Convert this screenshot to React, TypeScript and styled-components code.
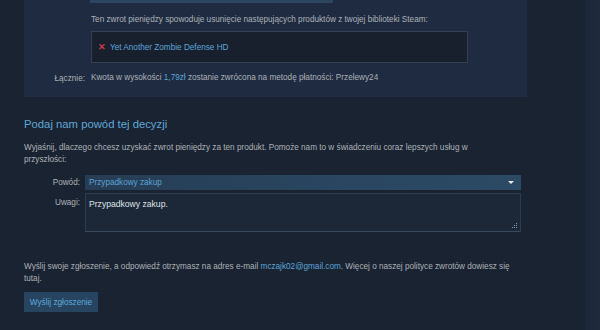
import React from "react";
import styled, { createGlobalStyle } from "styled-components";

const Global = createGlobalStyle`
  html, body {
    margin: 0;
    padding: 0;
    background: #1a2331;
    font-family: "Liberation Sans", Arial, sans-serif;
  }
`;

// całe okno: kolumna treści + wąski pasek po prawej
const Page = styled.div`
  display: flex;
  width: 600px;
  height: 330px;
  overflow: hidden;
`;

const Content = styled.div`
  width: 585px;
  background: #1a2331;
`;

const SideStrip = styled.div`
  flex: 1;
  background: linear-gradient(90deg, #1c2838, #1f2b3c);
`;

// górny panel z podsumowaniem zwrotu
const Summary = styled.section`
  margin-left: 24px;
  width: 503px;
  height: 97px;
  background: #1f2b41;
  box-sizing: border-box;
`;

const TopButtonEdge = styled.div`
  margin-left: 66px;
  width: 243px;
  height: 3px;
  background: #2e4560;
`;

const Row = styled.div<{ $top?: number }>`
  display: grid;
  grid-template-columns: 61px 1fr;
  column-gap: 6px;
  margin-top: ${(p) => p.$top ?? 0}px;
  align-items: center;
`;

const Label = styled.div`
  text-align: right;
  font-size: 8.2px;
  color: #acb2b8;
`;

const Text = styled.div`
  font-size: 8.2px;
  line-height: 12px;
  color: #acb2b8;
`;

const ProductBox = styled.div`
  width: 377px;
  height: 32px;
  box-sizing: border-box;
  background: #19202d;
  border: 1px solid #344052;
  display: flex;
  align-items: center;
  padding-left: 6px;
  gap: 4px;
  font-size: 8.2px;
`;

const Cross = styled.span`
  color: #c9394d;
  font-weight: bold;
  font-size: 9px;
`;

const Link = styled.span`
  color: #5aa6d8;
`;

// dolna część z formularzem
const Reason = styled.section`
  padding: 0 0 0 24px;
  width: 497px;
`;

const Heading = styled.h2`
  margin: 19px 0 0;
  font-weight: normal;
  font-size: 11.3px;
  line-height: 16px;
  color: #5fa7d6;
`;

const Para = styled.p<{ $top: number }>`
  margin: ${(p) => p.$top}px 0 0;
  font-size: 8.2px;
  line-height: 12px;
  color: #acb2b8;
  white-space: nowrap;
`;

const FormRow = styled.div<{ $top: number }>`
  display: grid;
  grid-template-columns: 56px 436px;
  column-gap: 5px;
  margin-top: ${(p) => p.$top}px;
  align-items: start;
`;

const FormLabel = styled.div<{ $pad: number }>`
  text-align: right;
  font-size: 8.2px;
  color: #acb2b8;
  padding-top: ${(p) => p.$pad}px;
`;

const Select = styled.div`
  height: 15px;
  background: linear-gradient(90deg, #263d55 0%, #2a4660 60%, #2c4a64 100%);
  display: flex;
  align-items: center;
  justify-content: space-between;
  padding: 0 7px 0 4px;
  font-size: 8.2px;
  color: #5ba3d3;
`;

const Arrow = styled.span`
  width: 0;
  height: 0;
  border-left: 3px solid transparent;
  border-right: 3px solid transparent;
  border-top: 3px solid #e6eef5;
`;

const TextArea = styled.div`
  height: 39px;
  box-sizing: border-box;
  background: #1c2737;
  border: 1px solid #2f3b4c;
  border-bottom-color: #3a4a5e;
  padding: 5px 3px;
  font-size: 8.6px;
  color: #dde3e8;
  position: relative;
`;

const Grip = styled.svg`
  position: absolute;
  right: 2px;
  bottom: 2px;
`;

const Button = styled.button`
  margin-top: 7px;
  width: 74px;
  height: 20px;
  border: none;
  background: #274561;
  color: #5fa9d8;
  font-family: inherit;
  font-size: 8.2px;
  padding: 0;
`;

export default function App() {
  return (
    <>
      <Global />
      <Page>
        <Content>
          <Summary>
            <TopButtonEdge />
            <Row $top={11}>
              <span />
              <Text>
                Ten zwrot pieniędzy spowoduje usunięcie następujących produktów z twojej biblioteki Steam:
              </Text>
            </Row>
            <Row $top={5}>
              <span />
              <ProductBox>
                <Cross>✕</Cross>
                <Link>Yet Another Zombie Defense HD</Link>
              </ProductBox>
            </Row>
            <Row $top={9}>
              <Label>Łącznie:</Label>
              <Text>
                Kwota w wysokości <Link>1,79zł</Link> zostanie zwrócona na metodę płatności: Przelewy24
              </Text>
            </Row>
          </Summary>

          <Reason>
            <Heading>Podaj nam powód tej decyzji</Heading>
            <Para $top={10}>
              Wyjaśnij, dlaczego chcesz uzyskać zwrot pieniędzy za ten produkt. Pomoże nam to w świadczeniu coraz lepszych usług w
              <br />
              przyszłości:
            </Para>
            <FormRow $top={9}>
              <FormLabel $pad={3}>Powód:</FormLabel>
              <Select>
                Przypadkowy zakup
                <Arrow />
              </Select>
            </FormRow>
            <FormRow $top={3}>
              <FormLabel $pad={5}>Uwagi:</FormLabel>
              <TextArea>
                Przypadkowy zakup.
                <Grip width="6" height="6" viewBox="0 0 6 6">
                  <rect x="4" y="0" width="1" height="1" fill="#8a95a3" />
                  <rect x="2" y="2" width="1" height="1" fill="#8a95a3" />
                  <rect x="4" y="2" width="1" height="1" fill="#8a95a3" />
                  <rect x="0" y="4" width="1" height="1" fill="#8a95a3" />
                  <rect x="2" y="4" width="1" height="1" fill="#8a95a3" />
                  <rect x="4" y="4" width="1" height="1" fill="#8a95a3" />
                </Grip>
              </TextArea>
            </FormRow>
            <Para $top={29}>
              Wyślij swoje zgłoszenie, a odpowiedź otrzymasz na adres e-mail <Link>mczajk02@gmail.com</Link>. Więcej o naszej polityce zwrotów dowiesz się
              <br />
              tutaj.
            </Para>
            <Button>Wyślij zgłoszenie</Button>
          </Reason>
        </Content>
        <SideStrip />
      </Page>
    </>
  );
}
